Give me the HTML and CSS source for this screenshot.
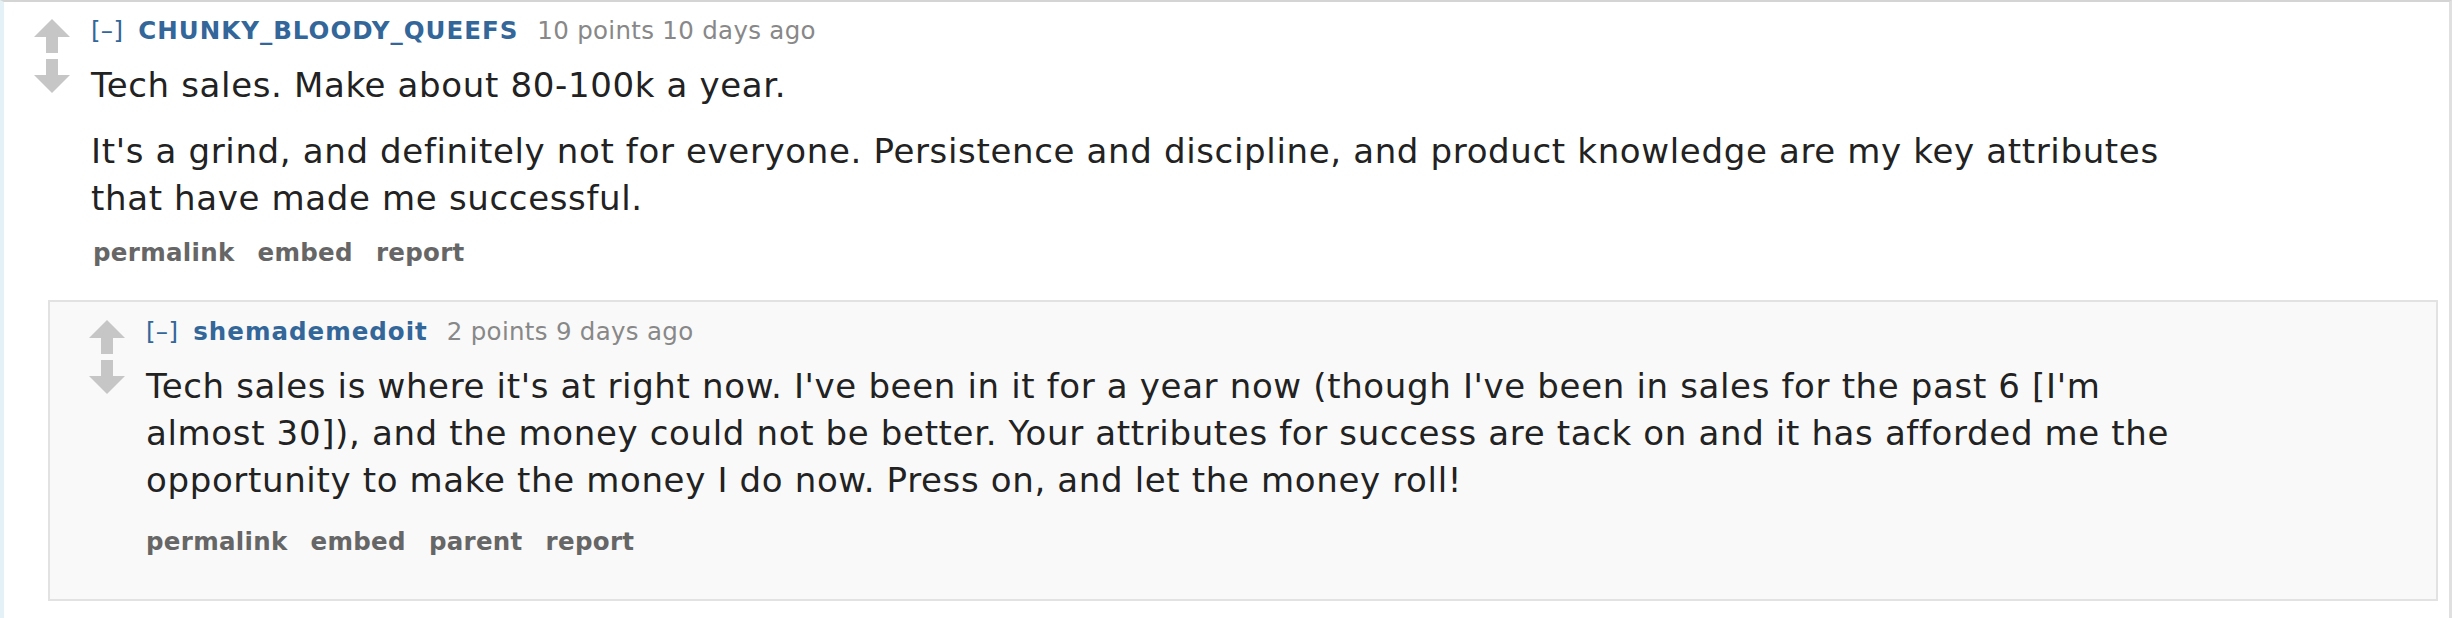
FILE: index.html
```html
<!DOCTYPE html>
<html>
<head>
<meta charset="utf-8">
<link rel="stylesheet" href="styles.css">
</head>
<body>
<div class="page">
  <div class="comment">
    <div class="midcol">
      <svg class="arrow" viewBox="0 0 36 34"><path d="M18 0 L36 18 L24 18 L24 34 L12 34 L12 18 L0 18 Z"/></svg>
      <svg class="arrow down" viewBox="0 0 36 34"><path d="M12 0 L24 0 L24 16 L36 16 L18 34 L0 16 L12 16 Z"/></svg>
    </div>
    <div class="entry">
      <p class="tagline"><a class="expand">[–]</a><a class="author">CHUNKY_BLOODY_QUEEFS</a><span class="score">10 points</span> <time>10 days ago</time></p>
      <div class="md">
        <p>Tech sales. Make about 80-100k a year.</p>
        <p>It's a grind, and definitely not for everyone. Persistence and discipline, and product knowledge are my key attributes that have made me successful.</p>
      </div>
      <ul class="buttons">
        <li>permalink</li>
        <li>embed</li>
        <li>report</li>
      </ul>
    </div>
  </div>
  <div class="child">
    <div class="comment">
      <div class="midcol">
        <svg class="arrow" viewBox="0 0 36 34"><path d="M18 0 L36 18 L24 18 L24 34 L12 34 L12 18 L0 18 Z"/></svg>
        <svg class="arrow down" viewBox="0 0 36 34"><path d="M12 0 L24 0 L24 16 L36 16 L18 34 L0 16 L12 16 Z"/></svg>
      </div>
      <div class="entry">
        <p class="tagline"><a class="expand">[–]</a><a class="author">shemademedoit</a><span class="score">2 points</span> <time>9 days ago</time></p>
        <div class="md">
          <p>Tech sales is where it's at right now. I've been in it for a year now (though I've been in sales for the past 6 [I'm<br>almost 30]), and the money could not be better. Your attributes for success are tack on and it has afforded me the opportunity to make the money I do now. Press on, and let the money roll!</p>
        </div>
        <ul class="buttons child-buttons">
          <li>permalink</li>
          <li>embed</li>
          <li>parent</li>
          <li>report</li>
        </ul>
      </div>
    </div>
  </div>
</div>
</body>
</html>
```

FILE: styles.css
```css
html, body {
  margin: 0;
  padding: 0;
  background: #ffffff;
}
body {
  font-family: "DejaVu Sans", Verdana, sans-serif;
  width: 2452px;
  height: 618px;
  overflow: hidden;
}
.page {
  box-sizing: border-box;
  height: 618px;
  border-top: 2px solid #d4d4d4;
  border-left: 4px solid #e4f2f7;
  border-right: 3px solid #e0e0e0;
  background: #ffffff;
}
.comment {
  display: flex;
  align-items: flex-start;
}
.page > .comment {
  padding: 15px 0 0 30px;
}
.midcol {
  width: 36px;
  display: flex;
  flex-direction: column;
  gap: 6px;
  padding-top: 2px;
  margin-right: 21px;
}
.arrow {
  width: 36px;
  height: 34px;
  fill: #c6c6c6;
  display: block;
}
.entry {
  flex: 1;
}
.tagline {
  margin: 0;
  font-size: 24.5px;
  line-height: 28px;
  color: #888888;
  letter-spacing: 0.3px;
}
.expand {
  color: #336699;
  margin-right: 15px;
}
.author {
  color: #336699;
  font-weight: bold;
  letter-spacing: 1px;
  margin-right: 19px;
}
.md {
  margin-top: 17px;
  max-width: 2110px;
  font-size: 34px;
  line-height: 47px;
  letter-spacing: 0.65px;
  color: #222222;
}
.md p {
  margin: 0 0 19px 0;
}
.md p:last-child {
  margin-bottom: 0;
}
.buttons {
  list-style: none;
  margin: 17px 0 0 0;
  padding: 0 0 0 2px;
  display: flex;
  gap: 23px;
  font-size: 24.5px;
  line-height: 28px;
  letter-spacing: 0.3px;
  font-weight: bold;
  color: #666666;
}
.child-buttons {
  margin-top: 24px;
  padding-left: 0;
}
.child {
  margin: 33px 11px 0 44px;
  height: 301px;
  box-sizing: border-box;
  border: 2px solid #e2e2e2;
  background: #f9f9f9;
}
.child > .comment {
  padding: 16px 0 0 39px;
}
```
